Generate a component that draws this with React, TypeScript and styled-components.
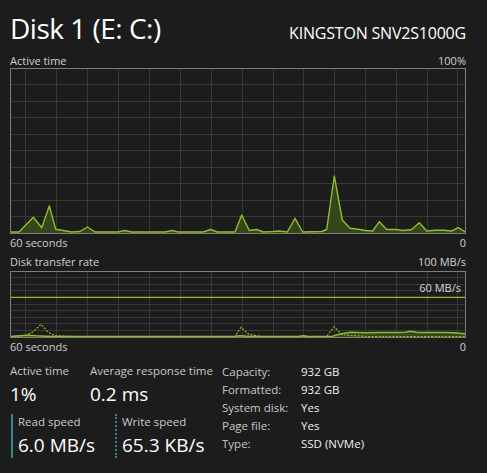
import styled, { createGlobalStyle } from "styled-components";

const GlobalStyle = createGlobalStyle`
  html, body {
    margin: 0;
    padding: 0;
    background: #1c1c1c;
  }
  body {
    font-family: "Open Sans", "Noto Sans", sans-serif;
    color: #ffffff;
  }
`;

const LINE = "#8fbd2b";
const FILL = "#35461a";
const GRID = "#383838";
const TEAL = "#2b8c8a";

const Page = styled.div`
  width: 456px;
  height: 473px;
  padding: 0 21px 0 10px;
  overflow: hidden;
`;

const Header = styled.div`
  display: flex;
  justify-content: space-between;
  align-items: baseline;
  height: 49px;
  padding-top: 9px;
  box-sizing: border-box;
`;

const Title = styled.h1`
  margin: 0;
  font-size: 28px;
  font-weight: 400;
  line-height: 39px;
  letter-spacing: -0.5px;
`;

const Model = styled.div`
  font-size: 16px;
  line-height: 20px;
  letter-spacing: -0.2px;
`;

const AxisRow = styled.div<{ $h: number }>`
  display: flex;
  justify-content: space-between;
  align-items: flex-end;
  height: ${(p) => p.$h}px;
  font-size: 11px;
  line-height: 14px;
  color: #d0d0d0;
`;

const ChartFrame = styled.div<{ $h: number; $mt?: number }>`
  position: relative;
  height: ${(p) => p.$h}px;
  margin-top: ${(p) => p.$mt ?? 0}px;
  border: 1px solid #7c7c7c;
  svg {
    display: block;
    width: 100%;
    height: 100%;
  }
`;

const Marker = styled.span`
  position: absolute;
  top: 9px;
  right: 4px;
  font-size: 11px;
  line-height: 14px;
  color: #d6d6d6;
`;

const Stats = styled.div`
  display: flex;
  margin-top: 9px;
`;

const Perf = styled.div`
  width: 212px;
  display: flex;
  flex-direction: column;
  gap: 7px;
`;

const PerfRow = styled.div`
  display: flex;
`;

const Metric = styled.div<{ $w?: number }>`
  width: ${(p) => (p.$w ? `${p.$w}px` : "auto")};
`;

const Speed = styled.div<{ $dotted?: boolean; $w?: number }>`
  width: ${(p) => (p.$w ? `${p.$w}px` : "auto")};
  padding-left: 5px;
  border-left: 2px ${(p) => (p.$dotted ? "dotted" : "solid")} ${TEAL};
  margin-left: 1px;
  box-sizing: border-box;
`;

const Label = styled.div`
  font-size: 11.5px;
  line-height: 16px;
  color: #c8c8c8;
  white-space: nowrap;
`;

const Value = styled.div`
  font-size: 19px;
  line-height: 26px;
  margin-top: 2px;
  white-space: nowrap;
`;

const Props = styled.dl`
  margin: 0;
  display: grid;
  grid-template-columns: 79px auto;
  grid-auto-rows: 18px;
  font-size: 11.5px;
  line-height: 18px;
  dt {
    color: #c8c8c8;
  }
  dd {
    margin: 0;
    color: #f0f0f0;
  }
`;

const VLINES = [25.5, 56.5, 87.5, 118.5, 149.5, 180.5, 211, 242, 273, 303.5, 334.5, 365.5, 396.5, 427, 457.5];

const activePts: [number, number][] = [
  [11, 232], [19, 232], [33.3, 217.3], [41.7, 227.7], [49.3, 206], [55.7, 229.3], [63.3, 230.5],
  [71.7, 232], [80, 231.5], [87.3, 227], [95, 232], [118, 232], [125, 230.5], [131.7, 232],
  [165, 232], [171.7, 230.5], [178.3, 232], [203, 232], [210.7, 229.5], [217.3, 232], [235, 232],
  [241.7, 215], [249.3, 230.5], [256.7, 229.5], [263.3, 232], [273.3, 231.5], [279.3, 231],
  [287.3, 232], [295, 218.3], [302.7, 232], [321.7, 231.5], [326.7, 229.5], [334.3, 176],
  [342.3, 220], [350, 228.3], [358.3, 229.3], [365.3, 230.5], [372.7, 231], [379.3, 221.7],
  [386.7, 229.5], [396, 229.5], [403.3, 230.5], [411.7, 229.5], [419.3, 222.7], [426.7, 231],
  [435, 230.3], [443.3, 230.3], [451.7, 231], [458.3, 227.7], [465, 231.7],
];

const writePts: [number, number][] = [
  [11, 336.5], [20, 336], [26.7, 335], [33.3, 331.7], [41, 324.3], [48.3, 332.3], [55, 335.7],
  [66.7, 336.2], [72, 336.5], [235, 336.5], [241, 327.3], [248.3, 334], [256.7, 335.7], [263, 336.5],
  [300, 336.5], [303.3, 335.8], [307, 336.5], [326.7, 336.5], [334.3, 326.7], [341.7, 334.5],
  [350, 335.5], [360, 336], [367, 336.5], [465, 336.5],
];

const readPts: [number, number][] = [
  [11, 336.5], [20, 335.7], [28, 335.2], [36, 335.8], [45, 336.2], [55, 336.5], [233, 336.5],
  [240, 335.8], [248, 336.2], [256, 336.5], [298, 336.5], [303, 335.8], [309, 336.5],
  [331.7, 336.5], [340, 334], [350, 332.3], [365, 332.8], [380, 332.5], [395, 332.5], [405, 332.4],
  [410, 331.3], [418, 332.5], [430, 332.5], [445, 332.5], [455, 332.8], [465, 333.7],
];

const toLine = (pts: [number, number][]) =>
  pts.map(([x, y], i) => `${i ? "L" : "M"}${x} ${y}`).join(" ");

const toArea = (pts: [number, number][], base: number) =>
  `${toLine(pts)} L465 ${base} L11 ${base} Z`;

function Grid({ top, step }: { top: number; step: number }) {
  return (
    <g stroke={GRID} strokeWidth={1} shapeRendering="crispEdges">
      {VLINES.map((x) => (
        <line key={`v${x}`} x1={x} x2={x} y1={top} y2={top + step * 10} />
      ))}
      {Array.from({ length: 9 }, (_, i) => top + step * (i + 1)).map((y) => (
        <line key={`h${y}`} x1={11} x2={465} y1={y} y2={y} />
      ))}
    </g>
  );
}

function ActiveChart() {
  return (
    <svg viewBox="11 69 454 164" preserveAspectRatio="none">
      <Grid top={68} step={16.5} />
      <path d={toArea(activePts, 233)} fill={FILL} />
      <path d={toLine(activePts)} fill="none" stroke={LINE} strokeWidth={1.4} strokeLinejoin="round" />
    </svg>
  );
}

function TransferChart() {
  return (
    <svg viewBox="11 272 454 65" preserveAspectRatio="none">
      <Grid top={271} step={6.6} />
      <path d={toArea(readPts, 337)} fill={FILL} />
      <path d={toLine(readPts)} fill="none" stroke={LINE} strokeWidth={1.4} />
      <path d={toLine(writePts)} fill="none" stroke={LINE} strokeWidth={1.2} strokeDasharray="2 1.5" />
      <line x1={11} x2={465} y1={297.4} y2={297.4} stroke={LINE} strokeWidth={1.4} />
    </svg>
  );
}

export default function App() {
  return (
    <Page>
      <GlobalStyle />
      <Header>
        <Title>Disk 1 (E: C:)</Title>
        <Model>KINGSTON SNV2S1000G</Model>
      </Header>
      <AxisRow $h={19}>
        <span>Active time</span>
        <span>100%</span>
      </AxisRow>
      <ChartFrame $h={164}>
        <ActiveChart />
      </ChartFrame>
      <AxisRow $h={16}>
        <span>60 seconds</span>
        <span>0</span>
      </AxisRow>
      <AxisRow $h={19}>
        <span>Disk transfer rate</span>
        <span>100 MB/s</span>
      </AxisRow>
      <ChartFrame $h={65} $mt={2}>
        <TransferChart />
        <Marker>60 MB/s</Marker>
      </ChartFrame>
      <AxisRow $h={16}>
        <span>60 seconds</span>
        <span>0</span>
      </AxisRow>
      <Stats>
        <Perf>
          <PerfRow>
            <Metric $w={80}>
              <Label>Active time</Label>
              <Value>1%</Value>
            </Metric>
            <Metric>
              <Label>Average response time</Label>
              <Value>0.2 ms</Value>
            </Metric>
          </PerfRow>
          <PerfRow>
            <Speed $w={103}>
              <Label>Read speed</Label>
              <Value>6.0 MB/s</Value>
            </Speed>
            <Speed $dotted>
              <Label>Write speed</Label>
              <Value>65.3 KB/s</Value>
            </Speed>
          </PerfRow>
        </Perf>
        <Props>
          <dt>Capacity:</dt>
          <dd>932 GB</dd>
          <dt>Formatted:</dt>
          <dd>932 GB</dd>
          <dt>System disk:</dt>
          <dd>Yes</dd>
          <dt>Page file:</dt>
          <dd>Yes</dd>
          <dt>Type:</dt>
          <dd>SSD (NVMe)</dd>
        </Props>
      </Stats>
    </Page>
  );
}
